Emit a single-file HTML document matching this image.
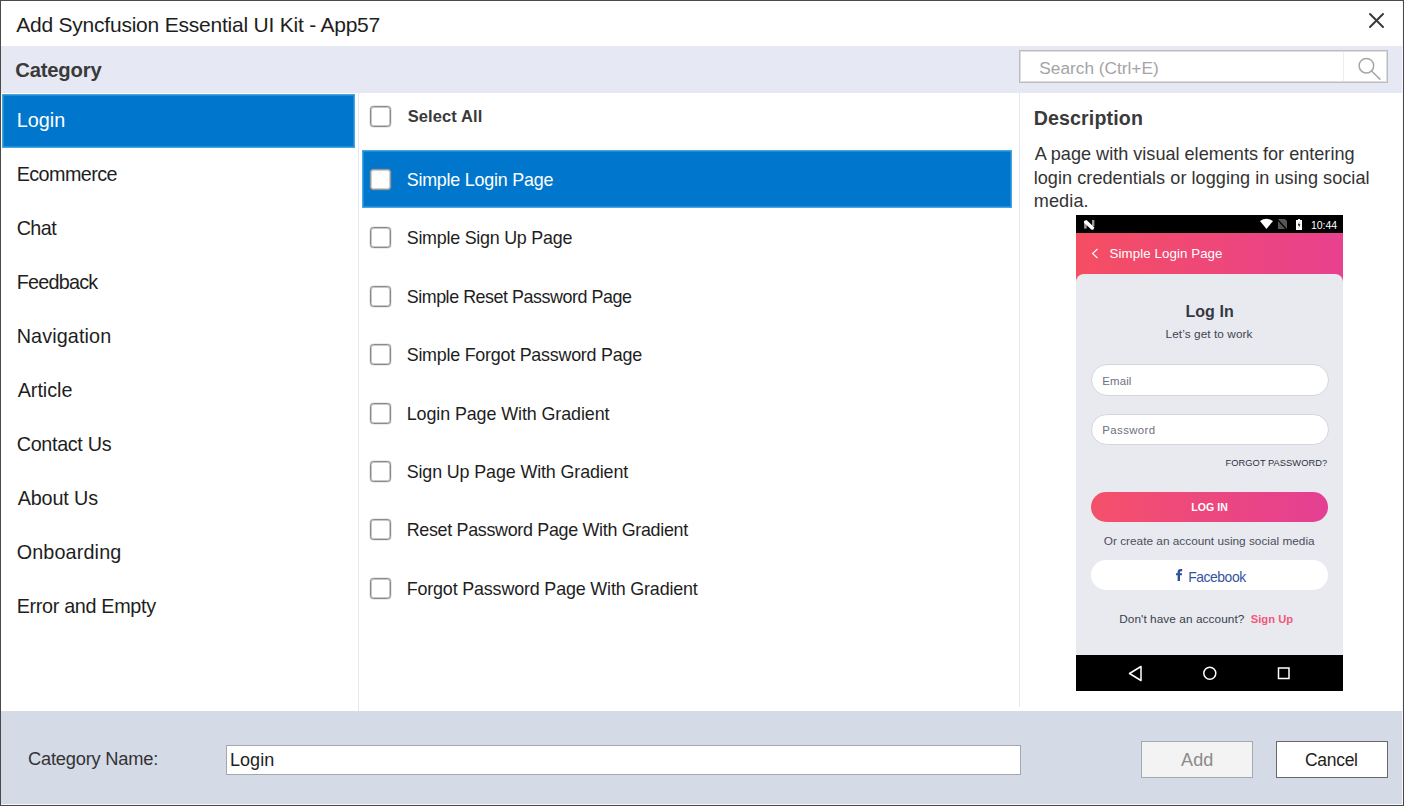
<!DOCTYPE html>
<html><head><meta charset="utf-8"><style>
html,body{margin:0;padding:0;width:1404px;height:806px;overflow:hidden;background:#fff;}
body{position:relative;font-family:"Liberation Sans", sans-serif;}
.t{position:absolute;white-space:pre;}
.r{position:absolute;}
</style></head><body>
<div class="r" style="left:0px;top:0px;width:1404px;height:806px;background:#fff;"></div>
<div class="r" style="left:1px;top:46px;width:1402px;height:47px;background:#e6e9f4;"></div>
<div class="r" style="left:1px;top:711px;width:1402px;height:94px;background:#d5dae7;"></div>
<div class="r" style="left:1402px;top:1px;width:1px;height:804px;background:#f4f6fb;"></div>
<div class="r" style="left:1px;top:804px;width:1402px;height:1px;background:#f4f6fb;"></div>
<div class="r" style="left:0px;top:0px;width:1404px;height:806px;box-sizing:border-box;border:1px solid #4a4a4a;background:transparent;"></div>
<div class="t" style="left:16.20px;top:14.00px;font-size:21px;line-height:21px;color:#1e1e1e;font-weight:normal;letter-spacing:-0.219px;">Add Syncfusion Essential UI Kit - App57</div>
<svg class="r" style="left:1366px;top:10px" width="22" height="22" viewBox="0 0 22 22"><path d="M4 4 L17 17 M17 4 L4 17" stroke="#3a3a3a" stroke-width="2" stroke-linecap="round"/></svg>
<div class="t" style="left:15.20px;top:60.00px;font-size:20.3px;line-height:20.3px;color:#3a3a3a;font-weight:bold;letter-spacing:-0.204px;">Category</div>
<div class="r" style="left:1019px;top:50px;width:369px;height:33px;box-sizing:border-box;border:1px solid #bcbcbc;box-shadow:inset 0 0 0 1px #dedede;background:#fff;"></div>
<div class="r" style="left:1343px;top:52px;width:1px;height:29px;background:#ededf3;"></div>
<div class="t" style="left:1039.30px;top:60.00px;font-size:17.3px;line-height:17.3px;color:#a4a4a4;font-weight:normal;letter-spacing:-0.012px;">Search (Ctrl+E)</div>
<svg class="r" style="left:1354px;top:54px" width="30" height="30" viewBox="0 0 30 30"><circle cx="12.4" cy="11.7" r="7.3" fill="none" stroke="#a6a6a6" stroke-width="1.5"/><path d="M17.6 17 L26.4 25.6" stroke="#a6a6a6" stroke-width="1.5"/></svg>
<div class="r" style="left:358px;top:93px;width:1px;height:618px;background:#e4e8f3;"></div>
<div class="r" style="left:2px;top:94px;width:353px;height:54px;box-sizing:border-box;border:1px solid #45a6e2;box-shadow:inset 0 0 0 1px #228bd6;background:#0077cc;"></div>
<div class="t" style="left:16.70px;top:111.00px;font-size:19.8px;line-height:19.8px;color:#fff;font-weight:normal;letter-spacing:0.050px;">Login</div>
<div class="t" style="left:16.70px;top:165.00px;font-size:19.8px;line-height:19.8px;color:#1e1e1e;font-weight:normal;letter-spacing:-0.575px;">Ecommerce</div>
<div class="t" style="left:16.70px;top:219.00px;font-size:19.8px;line-height:19.8px;color:#1e1e1e;font-weight:normal;letter-spacing:-0.603px;">Chat</div>
<div class="t" style="left:16.70px;top:273.00px;font-size:19.8px;line-height:19.8px;color:#1e1e1e;font-weight:normal;letter-spacing:-0.775px;">Feedback</div>
<div class="t" style="left:16.70px;top:327.00px;font-size:19.8px;line-height:19.8px;color:#1e1e1e;font-weight:normal;letter-spacing:0.112px;">Navigation</div>
<div class="t" style="left:17.70px;top:381.00px;font-size:19.8px;line-height:19.8px;color:#1e1e1e;font-weight:normal;letter-spacing:-0.036px;">Article</div>
<div class="t" style="left:16.70px;top:435.00px;font-size:19.8px;line-height:19.8px;color:#1e1e1e;font-weight:normal;letter-spacing:-0.333px;">Contact Us</div>
<div class="t" style="left:17.70px;top:489.00px;font-size:19.8px;line-height:19.8px;color:#1e1e1e;font-weight:normal;letter-spacing:-0.143px;">About Us</div>
<div class="t" style="left:16.70px;top:543.00px;font-size:19.8px;line-height:19.8px;color:#1e1e1e;font-weight:normal;letter-spacing:0.133px;">Onboarding</div>
<div class="t" style="left:16.70px;top:597.00px;font-size:19.8px;line-height:19.8px;color:#1e1e1e;font-weight:normal;letter-spacing:-0.331px;">Error and Empty</div>
<div class="r" style="left:1019px;top:93px;width:1px;height:614px;background:#e4e8f3;"></div>
<div class="r" style="left:370px;top:106px;width:21px;height:21px;box-sizing:border-box;border:1px solid #8a8a8a;box-shadow:inset 0 0 0 1px #c8c8c8, 0 0 0 0.5px rgba(138,138,138,0.35);border-radius:3.5px;background:#fff;"></div>
<div class="t" style="left:407.70px;top:108.00px;font-size:16.5px;line-height:16.5px;color:#3a3a3a;font-weight:bold;letter-spacing:0.112px;">Select All</div>
<div class="r" style="left:362px;top:150px;width:650px;height:58px;box-sizing:border-box;border:1px solid #45a6e2;box-shadow:inset 0 0 0 1px #228bd6;background:#0077cc;"></div>
<div class="r" style="left:370px;top:169px;width:21px;height:21px;box-sizing:border-box;border:1px solid #969696;box-shadow:inset 0 0 0 1px #cfcfcf, 0 0 0 0.5px rgba(138,138,138,0.35);border-radius:3.5px;background:#fff;"></div>
<div class="t" style="left:406.70px;top:172.00px;font-size:17.9px;line-height:17.9px;color:#fff;font-weight:normal;letter-spacing:-0.211px;">Simple Login Page</div>
<div class="r" style="left:370px;top:227px;width:21px;height:21px;box-sizing:border-box;border:1px solid #8a8a8a;box-shadow:inset 0 0 0 1px #c8c8c8, 0 0 0 0.5px rgba(138,138,138,0.35);border-radius:3.5px;background:#fff;"></div>
<div class="t" style="left:406.70px;top:230.00px;font-size:17.9px;line-height:17.9px;color:#1e1e1e;font-weight:normal;letter-spacing:-0.244px;">Simple Sign Up Page</div>
<div class="r" style="left:370px;top:286px;width:21px;height:21px;box-sizing:border-box;border:1px solid #8a8a8a;box-shadow:inset 0 0 0 1px #c8c8c8, 0 0 0 0.5px rgba(138,138,138,0.35);border-radius:3.5px;background:#fff;"></div>
<div class="t" style="left:406.70px;top:289.00px;font-size:17.9px;line-height:17.9px;color:#1e1e1e;font-weight:normal;letter-spacing:-0.456px;">Simple Reset Password Page</div>
<div class="r" style="left:370px;top:344px;width:21px;height:21px;box-sizing:border-box;border:1px solid #8a8a8a;box-shadow:inset 0 0 0 1px #c8c8c8, 0 0 0 0.5px rgba(138,138,138,0.35);border-radius:3.5px;background:#fff;"></div>
<div class="t" style="left:406.70px;top:347.00px;font-size:17.9px;line-height:17.9px;color:#1e1e1e;font-weight:normal;letter-spacing:-0.240px;">Simple Forgot Password Page</div>
<div class="r" style="left:370px;top:403px;width:21px;height:21px;box-sizing:border-box;border:1px solid #8a8a8a;box-shadow:inset 0 0 0 1px #c8c8c8, 0 0 0 0.5px rgba(138,138,138,0.35);border-radius:3.5px;background:#fff;"></div>
<div class="t" style="left:406.70px;top:406.00px;font-size:17.9px;line-height:17.9px;color:#1e1e1e;font-weight:normal;letter-spacing:-0.087px;">Login Page With Gradient</div>
<div class="r" style="left:370px;top:461px;width:21px;height:21px;box-sizing:border-box;border:1px solid #8a8a8a;box-shadow:inset 0 0 0 1px #c8c8c8, 0 0 0 0.5px rgba(138,138,138,0.35);border-radius:3.5px;background:#fff;"></div>
<div class="t" style="left:406.70px;top:464.00px;font-size:17.9px;line-height:17.9px;color:#1e1e1e;font-weight:normal;letter-spacing:-0.128px;">Sign Up Page With Gradient</div>
<div class="r" style="left:370px;top:519px;width:21px;height:21px;box-sizing:border-box;border:1px solid #8a8a8a;box-shadow:inset 0 0 0 1px #c8c8c8, 0 0 0 0.5px rgba(138,138,138,0.35);border-radius:3.5px;background:#fff;"></div>
<div class="t" style="left:406.70px;top:522.00px;font-size:17.9px;line-height:17.9px;color:#1e1e1e;font-weight:normal;letter-spacing:-0.308px;">Reset Password Page With Gradient</div>
<div class="r" style="left:370px;top:578px;width:21px;height:21px;box-sizing:border-box;border:1px solid #8a8a8a;box-shadow:inset 0 0 0 1px #c8c8c8, 0 0 0 0.5px rgba(138,138,138,0.35);border-radius:3.5px;background:#fff;"></div>
<div class="t" style="left:406.70px;top:581.00px;font-size:17.9px;line-height:17.9px;color:#1e1e1e;font-weight:normal;letter-spacing:-0.157px;">Forgot Password Page With Gradient</div>
<div class="t" style="left:1033.70px;top:109.00px;font-size:19.6px;line-height:19.6px;color:#3a3a3a;font-weight:bold;letter-spacing:0.140px;">Description</div>
<div class="t" style="left:1034.70px;top:145.00px;font-size:18.1px;line-height:18.1px;color:#333;font-weight:normal;letter-spacing:0.000px;">A page with visual elements for entering</div>
<div class="t" style="left:1033.70px;top:169.00px;font-size:18.1px;line-height:18.1px;color:#333;font-weight:normal;letter-spacing:0.045px;">login credentials or logging in using social</div>
<div class="t" style="left:1033.70px;top:192.00px;font-size:18.1px;line-height:18.1px;color:#333;font-weight:normal;letter-spacing:0.120px;">media.</div>
<div class="r" style="left:1076px;top:215px;width:267px;height:476px;background:#000;"></div>
<div class="r" style="left:1076px;top:233px;width:267px;height:60px;background:linear-gradient(90deg,#f54e62,#e8418f);"></div>
<div class="r" style="left:1076px;top:274px;width:267px;height:381px;background:#e9eaef;border-radius:8px 8px 0 0;"></div>
<svg class="r" style="left:1076px;top:215px" width="267" height="18" viewBox="0 0 267 18"><path d="M8.1 6.5 H10.7 V13.6 H8.1 Z" fill="#9a9a9a"/><path d="M16 5 H18.4 V11.2 H16 Z" fill="#9a9a9a"/><path d="M8 6 L10.6 5 L18.4 12.4 L17.2 14.8 L15.6 14.8 L8 7.8 Z" fill="#fff"/><path d="M184 6 Q190.5 1.5 197 6 L190.5 14 Z" fill="#fff"/><path d="M202 4 L209 4 L211 6 L211 14 L202 14 Z" fill="#555"/><path d="M201 4 L211 15" stroke="#000" stroke-width="1.2"/><path d="M220 5 L222 5 L222 4 L224 4 L224 5 L226 5 L226 15 L220 15 Z" fill="#fff"/><path d="M223.5 6.5 L221.8 10.5 L223.2 10.5 L222.5 13.5 L224.4 9.2 L223 9.2 Z" fill="#000"/></svg>
<div class="t" style="left:1311.00px;top:220.00px;font-size:10.5px;line-height:10.5px;color:#fff;font-weight:normal;letter-spacing:-0.050px;">10:44</div>
<svg class="r" style="left:1090px;top:247px" width="10" height="13" viewBox="0 0 10 13"><path d="M7.5 2 L2.5 6.5 L7.5 11" fill="none" stroke="#fff" stroke-width="1.1"/></svg>
<div class="t" style="left:1109.50px;top:247.00px;font-size:13.3px;line-height:13.3px;color:#fff;font-weight:normal;letter-spacing:0.086px;">Simple Login Page</div>
<div class="t" style="left:1185.40px;top:304.00px;font-size:16px;line-height:16px;color:#343844;font-weight:bold;letter-spacing:0.060px;">Log In</div>
<div class="t" style="left:1165.60px;top:329.00px;font-size:11.8px;line-height:11.8px;color:#3f4452;font-weight:normal;letter-spacing:0.073px;">Let’s get to work</div>
<div class="r" style="left:1091px;top:364px;width:238px;height:32px;box-sizing:border-box;border:1px solid #d4d6dc;border-radius:16px;background:#fff;"></div>
<div class="t" style="left:1102.30px;top:376.00px;font-size:11.4px;line-height:11.4px;color:#6b7080;font-weight:normal;letter-spacing:0.150px;">Email</div>
<div class="r" style="left:1091px;top:414px;width:238px;height:31px;box-sizing:border-box;border:1px solid #d4d6dc;border-radius:16px;background:#fff;"></div>
<div class="t" style="left:1102.30px;top:425.00px;font-size:11.4px;line-height:11.4px;color:#6b7080;font-weight:normal;letter-spacing:0.403px;">Password</div>
<div class="t" style="left:1225.60px;top:459.00px;font-size:9.3px;line-height:9.3px;color:#2c3140;font-weight:normal;letter-spacing:0.042px;">FORGOT PASSWORD?</div>
<div class="r" style="left:1091px;top:492px;width:237px;height:30px;border-radius:15px;background:linear-gradient(90deg,#f5506a,#e43f93);"></div>
<div class="t" style="left:1191.20px;top:502.00px;font-size:10.5px;line-height:10.5px;color:#fff;font-weight:bold;letter-spacing:0.120px;">LOG IN</div>
<div class="t" style="left:1103.80px;top:536.00px;font-size:11.8px;line-height:11.8px;color:#4a4f5c;font-weight:normal;letter-spacing:0.009px;">Or create an account using social media</div>
<div class="r" style="left:1091px;top:560px;width:237px;height:30px;border-radius:15px;background:#fff;"></div>
<svg class="r" style="left:1174px;top:567px" width="10" height="16" viewBox="0 0 10 16"><path d="M3.6 14 V5.2 Q3.6 2 6.6 2 H8.2 V4.2 H7 Q6 4.2 6 5.2 V14 Z M2 6.3 H8 V8.2 H2 Z" fill="#2f4f9c"/></svg>
<div class="t" style="left:1188.30px;top:571.00px;font-size:13.9px;line-height:13.9px;color:#34539e;font-weight:normal;letter-spacing:-0.457px;">Facebook</div>
<div class="t" style="left:1119.20px;top:614.00px;font-size:11.8px;line-height:11.8px;color:#3a3f4c;font-weight:normal;letter-spacing:0.077px;">Don't have an account?</div>
<div class="t" style="left:1250.70px;top:614.00px;font-size:11.2px;line-height:11.2px;color:#f2587a;font-weight:bold;letter-spacing:0.024px;">Sign Up</div>
<svg class="r" style="left:1076px;top:655px" width="267" height="35" viewBox="0 0 267 35"><path d="M65 11.5 L53.5 18.5 L65 25.5 Z" fill="none" stroke="#fff" stroke-width="1.5" stroke-linejoin="round"/><circle cx="133.8" cy="18.3" r="6" fill="none" stroke="#fff" stroke-width="1.5"/><rect x="202.5" y="13" width="10.5" height="10.5" fill="none" stroke="#fff" stroke-width="1.5"/></svg>
<div class="t" style="left:28.00px;top:750.00px;font-size:18.3px;line-height:18.3px;color:#333;font-weight:normal;letter-spacing:-0.220px;">Category Name:</div>
<div class="r" style="left:226px;top:745px;width:795px;height:30px;box-sizing:border-box;border:1px solid #a3a7ae;background:#fff;"></div>
<div class="t" style="left:230.00px;top:751.00px;font-size:18px;line-height:18px;color:#1e1e1e;font-weight:normal;letter-spacing:0.038px;">Login</div>
<div class="r" style="left:1141px;top:741px;width:112px;height:37px;box-sizing:border-box;border:1px solid #a4a9ae;background:#f3f3f3;"></div>
<div class="t" style="left:1181.00px;top:751.00px;font-size:18px;line-height:18px;color:#8a8a8a;font-weight:normal;letter-spacing:0.150px;">Add</div>
<div class="r" style="left:1276px;top:741px;width:112px;height:37px;box-sizing:border-box;border:1px solid #686868;background:#fff;"></div>
<div class="t" style="left:1305.00px;top:752.00px;font-size:17.5px;line-height:17.5px;color:#1e1e1e;font-weight:normal;letter-spacing:-0.300px;">Cancel</div>
</body></html>
